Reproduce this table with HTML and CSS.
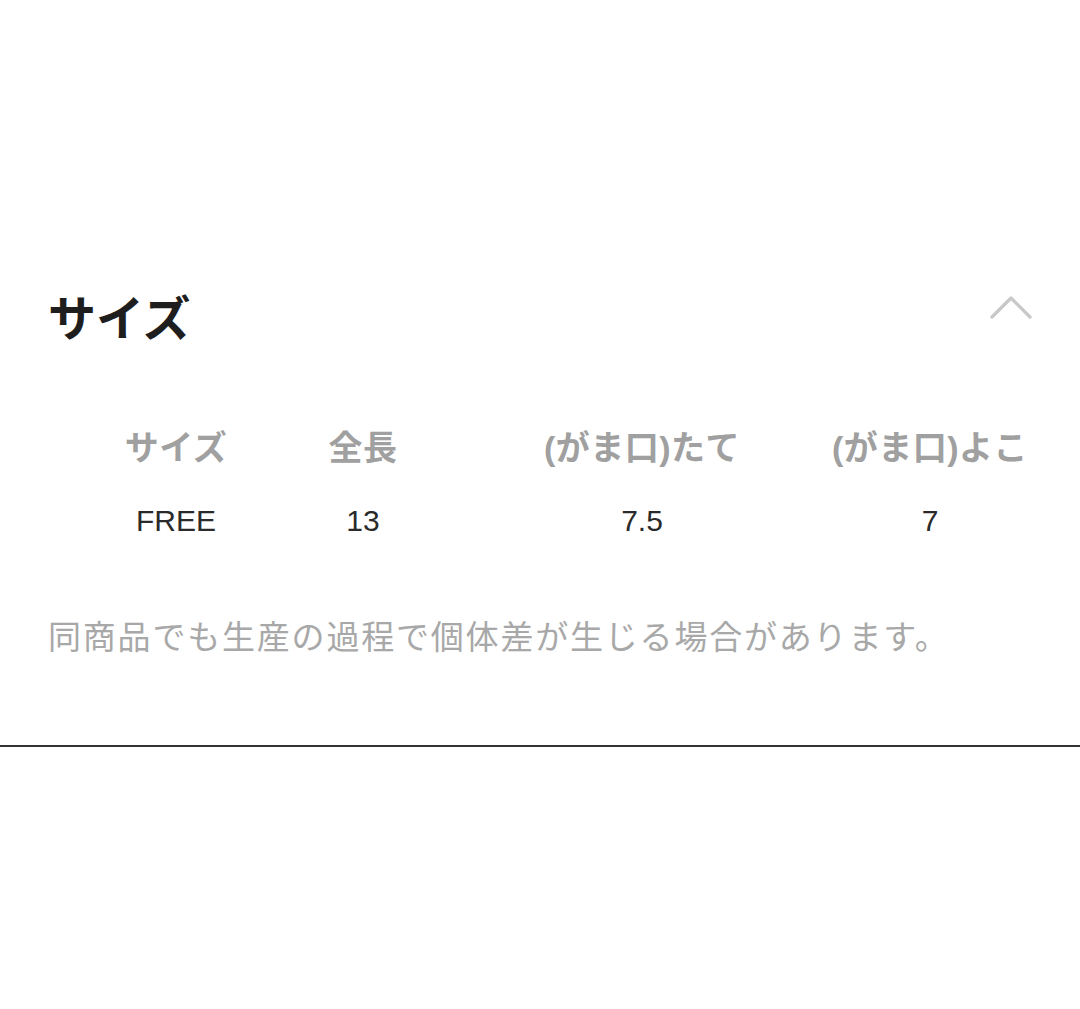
FILE: index.html
```html
<!DOCTYPE html>
<html lang="ja">
<head>
    <meta charset="UTF-8">
    <meta name="viewport" content="width=device-width, initial-scale=1.0">
    <title>サイズ</title>
    <link rel="stylesheet" href="styles.css">
</head>
<body>

    <section class="panel">
        <div class="panel-head">
            <h2>サイズ</h2>
            <svg class="chevron" width="44" height="28" viewBox="0 0 44 28">
                <path d="M3 22 L22 3 L41 22" fill="none" stroke="#c8c8c8" stroke-width="3.2" stroke-linecap="round" stroke-linejoin="round"/>
            </svg>
        </div>

        <!-- Size table -->
        <div class="size-table">
            <div class="cell th">サイズ</div>
            <div class="cell th">全長</div>
            <div class="cell th">(がま口)たて</div>
            <div class="cell th">(がま口)よこ</div>

            <div class="cell td">FREE</div>
            <div class="cell td">13</div>
            <div class="cell td">7.5</div>
            <div class="cell td">7</div>
        </div>

        <p class="note">同商品でも生産の過程で個体差が生じる場合があります。</p>
    </section>

</body>
</html>
```

FILE: styles.css
```css
/* General Styling */
body {
    margin: 0;
    background: #fff;
    font-family: "Liberation Sans", "Noto Sans CJK JP", sans-serif;
    color: #222;
}

.panel {
    padding: 288px 0 82px;
    border-bottom: 2px solid #333;
}

.panel-head {
    display: flex;
    justify-content: space-between;
    align-items: center;
    height: 64px;
    padding: 0 48px;
}

.panel-head h2 {
    margin: 0;
    font-size: 48px;
    font-weight: bold;
    line-height: 64px;
    color: #1e1e1e;
}

.chevron {
    margin-top: -22px;
    margin-right: -1px;
}

/* Size table */
.size-table {
    display: grid;
    grid-template-columns: 192px 182px 376px 200px;
    grid-auto-rows: 76px;
    margin: 55px 0 0 80px;
}

.cell {
    display: flex;
    align-items: center;
    justify-content: center;
    white-space: nowrap;
}

.th {
    font-size: 34px;
    font-weight: bold;
    color: #a0a0a0;
    letter-spacing: 0.5px;
}

.td {
    font-size: 30px;
    color: #2a2a2a;
}

.note {
    margin: 54px 0 0;
    padding: 0 48px;
    font-size: 33px;
    line-height: 50px;
    letter-spacing: 1.8px;
    color: #a8a8a8;
}
```
